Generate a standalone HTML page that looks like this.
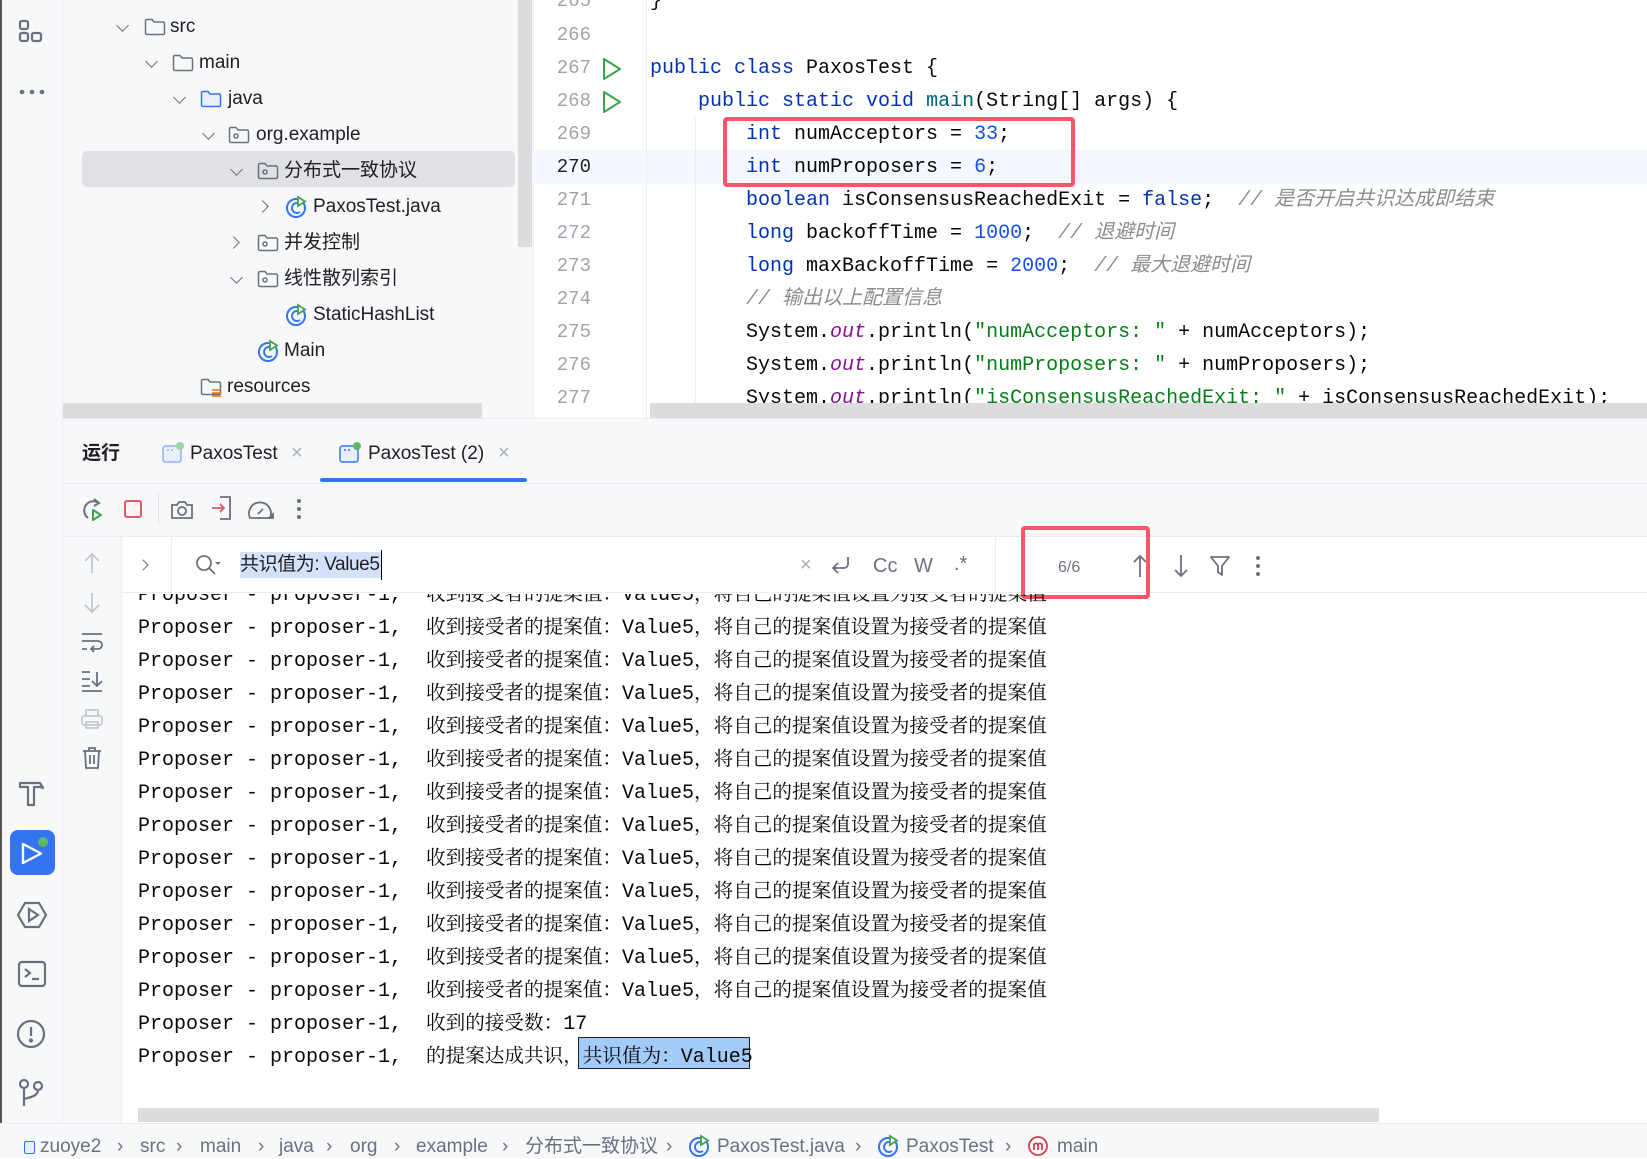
<!DOCTYPE html>
<html><head><meta charset="utf-8">
<style>
*{margin:0;padding:0;box-sizing:border-box}
body{width:1647px;height:1158px;overflow:hidden;background:#fff;font-family:"Liberation Sans","Noto Sans CJK SC",sans-serif;color:#1e1f22;position:relative}
.a{position:absolute}
.t{position:absolute;font-size:19px;line-height:24px;white-space:nowrap}
.chev{position:absolute;width:9px;height:9px;border-right:1.6px solid #6c707e;border-bottom:1.6px solid #6c707e}
.down{transform:rotate(45deg)}
.right{transform:rotate(-45deg)}
.ln{position:absolute;left:533px;width:58px;text-align:right;font-size:19px;color:#a0a3ab;font-family:"Liberation Mono",monospace;line-height:33px}
.code{position:absolute;left:650px;font-size:20px;line-height:33px;white-space:pre;font-family:"Liberation Mono","Noto Sans CJK SC",monospace;color:#080808}
.kw{color:#0033b3}.num{color:#1750eb}.str{color:#067d17}.cm{color:#8c8c8c;font-style:italic}.fld{color:#871094;font-style:italic}.fn{color:#00627a}
.con{position:absolute;left:138px;font-size:20px;line-height:33px;white-space:pre;font-family:"Liberation Mono",monospace;color:#080808}
.cj{font-family:"Noto Serif CJK SC",serif;font-size:19.6px}
.sb{position:absolute;top:1135px;font-size:19px;color:#6c707e;line-height:24px;white-space:nowrap}
.tr{position:absolute;left:0;top:2px;width:533px;height:418px}
.ed{position:absolute;left:0;top:2px;width:1647px;height:416px}
</style></head><body>

<!-- left strip -->
<div class="a" style="left:0;top:0;width:63px;height:1123px;background:#f7f8fa;border-right:1px solid #ebecf0"></div>
<div class="a" style="left:0;top:0;width:2px;height:1123px;background:#555"></div>
<svg class="a" style="left:18px;top:18px" width="28" height="28" viewBox="0 0 28 28" fill="none" stroke="#6c707e" stroke-width="2.2"><rect x="2" y="3" width="8" height="8" rx="2"/><rect x="2" y="15" width="8" height="8" rx="2"/><rect x="14" y="15" width="9" height="8" rx="2"/></svg>
<svg class="a" style="left:18px;top:88px" width="28" height="8"><circle cx="4" cy="4" r="2.3" fill="#6c707e"/><circle cx="14" cy="4" r="2.3" fill="#6c707e"/><circle cx="24" cy="4" r="2.3" fill="#6c707e"/></svg>
<svg class="a" style="left:17px;top:779px" width="28" height="30" viewBox="0 0 28 30" fill="none" stroke="#6c707e" stroke-width="2.2" stroke-linejoin="round"><path d="M3 4h20l3 5-3-1H17v18h-6V8H3z"/></svg>
<div class="a" style="left:10px;top:830px;width:45px;height:45px;background:#3574f0;border-radius:8px"></div>
<svg class="a" style="left:10px;top:830px" width="45" height="45"><path d="M13 14 L13 33 L31 23.5 Z" fill="none" stroke="#fff" stroke-width="2.4" stroke-linejoin="round"/><circle cx="33" cy="12" r="5" fill="#5fb865"/></svg>
<svg class="a" style="left:16px;top:900px" width="32" height="30" fill="none" stroke="#6c707e" stroke-width="2.2"><path d="M9 3h14l7 12-7 12H9L2 15z"/><path d="M13 9v12l9-6z"/></svg>
<svg class="a" style="left:17px;top:960px" width="30" height="28" fill="none" stroke="#6c707e" stroke-width="2.2"><rect x="2" y="2" width="26" height="24" rx="3"/><path d="M8 9l5 4-5 4M15 19h7"/></svg>
<svg class="a" style="left:16px;top:1019px" width="30" height="30" fill="none" stroke="#6c707e" stroke-width="2.2"><circle cx="15" cy="15" r="13"/><path d="M15 8v9"/><circle cx="15" cy="21.5" r="1" fill="#6c707e"/></svg>
<svg class="a" style="left:17px;top:1078px" width="28" height="30" fill="none" stroke="#6c707e" stroke-width="2.2"><circle cx="7" cy="6" r="4"/><circle cx="21" cy="8" r="4"/><path d="M7 10v18M21 12c0 6-7 7-14 9"/></svg>

<!-- project tree -->
<div class="a" style="left:63px;top:0;width:470px;height:418px;background:#f7f8fa"></div>
<div class="a" style="left:82px;top:151px;width:433px;height:36px;background:#dfe1e5;border-radius:5px"></div>
<div class="a" style="left:518px;top:0;width:14px;height:247px;background:#dcdcdf"></div>
<div class="tr">
<div class="chev down" style="left:118px;top:19px"></div>
<svg class="a" style="left:144px;top:16px" width="22" height="18" fill="none" stroke="#6c707e" stroke-width="1.5"><path d="M1.5 3a1.5 1.5 0 011.5-1.5h5l2 2.5h9a1.5 1.5 0 011.5 1.5V15a1.5 1.5 0 01-1.5 1.5H3A1.5 1.5 0 011.5 15z"/></svg>
<div class="t" style="left:170px;top:13px">src</div>

<div class="chev down" style="left:147px;top:55px"></div>
<svg class="a" style="left:172px;top:52px" width="22" height="18" fill="none" stroke="#6c707e" stroke-width="1.5"><path d="M1.5 3a1.5 1.5 0 011.5-1.5h5l2 2.5h9a1.5 1.5 0 011.5 1.5V15a1.5 1.5 0 01-1.5 1.5H3A1.5 1.5 0 011.5 15z"/></svg>
<div class="t" style="left:199px;top:49px">main</div>

<div class="chev down" style="left:175px;top:91px"></div>
<svg class="a" style="left:200px;top:88px" width="22" height="18" fill="#e7effd" stroke="#3574f0" stroke-width="1.5"><path d="M1.5 3a1.5 1.5 0 011.5-1.5h5l2 2.5h9a1.5 1.5 0 011.5 1.5V15a1.5 1.5 0 01-1.5 1.5H3A1.5 1.5 0 011.5 15z"/></svg>
<div class="t" style="left:228px;top:85px">java</div>

<div class="chev down" style="left:204px;top:127px"></div>
<svg class="a" style="left:228px;top:124px" width="22" height="18" fill="none" stroke="#6c707e" stroke-width="1.5"><path d="M1.5 3a1.5 1.5 0 011.5-1.5h5l2 2.5h9a1.5 1.5 0 011.5 1.5V15a1.5 1.5 0 01-1.5 1.5H3A1.5 1.5 0 011.5 15z"/><circle cx="8" cy="10" r="2"/></svg>
<div class="t" style="left:256px;top:121px">org.example</div>

<div class="chev down" style="left:232px;top:163px"></div>
<svg class="a" style="left:257px;top:160px" width="22" height="18" fill="none" stroke="#6c707e" stroke-width="1.5"><path d="M1.5 3a1.5 1.5 0 011.5-1.5h5l2 2.5h9a1.5 1.5 0 011.5 1.5V15a1.5 1.5 0 01-1.5 1.5H3A1.5 1.5 0 011.5 15z"/><circle cx="8" cy="10" r="2"/></svg>
<div class="t" style="left:284px;top:157px">分布式一致协议</div>

<div class="chev right" style="left:258px;top:200px"></div>
<svg class="a" style="left:285px;top:193px" width="24" height="24" fill="none" stroke="#3574f0" stroke-width="2"><circle cx="11" cy="13" r="9"/><path d="M15 9a5 5 0 100 8"/><path d="M13 2v9l7-4.5z" fill="#fff" stroke="#3fa34d" stroke-width="1.8"/></svg>
<div class="t" style="left:313px;top:193px">PaxosTest.java</div>

<div class="chev right" style="left:229px;top:236px"></div>
<svg class="a" style="left:257px;top:232px" width="22" height="18" fill="none" stroke="#6c707e" stroke-width="1.5"><path d="M1.5 3a1.5 1.5 0 011.5-1.5h5l2 2.5h9a1.5 1.5 0 011.5 1.5V15a1.5 1.5 0 01-1.5 1.5H3A1.5 1.5 0 011.5 15z"/><circle cx="8" cy="10" r="2"/></svg>
<div class="t" style="left:284px;top:229px">并发控制</div>

<div class="chev down" style="left:232px;top:271px"></div>
<svg class="a" style="left:257px;top:268px" width="22" height="18" fill="none" stroke="#6c707e" stroke-width="1.5"><path d="M1.5 3a1.5 1.5 0 011.5-1.5h5l2 2.5h9a1.5 1.5 0 011.5 1.5V15a1.5 1.5 0 01-1.5 1.5H3A1.5 1.5 0 011.5 15z"/><circle cx="8" cy="10" r="2"/></svg>
<div class="t" style="left:284px;top:265px">线性散列索引</div>

<svg class="a" style="left:285px;top:301px" width="24" height="24" fill="none" stroke="#3574f0" stroke-width="2"><circle cx="11" cy="13" r="9"/><path d="M15 9a5 5 0 100 8"/><path d="M13 2v9l7-4.5z" fill="#fff" stroke="#3fa34d" stroke-width="1.8"/></svg>
<div class="t" style="left:313px;top:301px">StaticHashList</div>

<svg class="a" style="left:257px;top:337px" width="24" height="24" fill="none" stroke="#3574f0" stroke-width="2"><circle cx="11" cy="13" r="9"/><path d="M15 9a5 5 0 100 8"/><path d="M13 2v9l7-4.5z" fill="#fff" stroke="#3fa34d" stroke-width="1.8"/></svg>
<div class="t" style="left:284px;top:337px">Main</div>

<svg class="a" style="left:200px;top:376px" width="24" height="20" fill="none" stroke="#6c707e" stroke-width="1.5"><path d="M1.5 3a1.5 1.5 0 011.5-1.5h5l2 2.5h9a1.5 1.5 0 011.5 1.5V15a1.5 1.5 0 01-1.5 1.5H3A1.5 1.5 0 011.5 15z"/><path d="M12 12h9M12 15h9M12 18h9" stroke="#e66d17"/></svg>
<div class="t" style="left:227px;top:373px">resources</div>
</div>
<div class="a" style="left:63px;top:403px;width:419px;height:15px;background:#dcdcdf"></div>

<!-- editor -->
<div class="a" style="left:533px;top:0;width:1px;height:418px;background:#ebecf0"></div>
<div class="a" style="left:533px;top:150px;width:1114px;height:34px;background:#f5f8fe"></div>
<div class="a" style="left:646px;top:0;width:1px;height:418px;background:#ebecf0"></div>
<div class="a" style="left:695px;top:118px;width:1px;height:300px;background:#ebecf0"></div>
<div class="ed">
<div class="ln" style="top:-17px">265</div>
<div class="ln" style="top:17px">266</div>
<div class="ln" style="top:50px">267</div>
<div class="ln" style="top:83px">268</div>
<div class="ln" style="top:116px">269</div>
<div class="ln" style="top:149px;color:#1e1f22">270</div>
<div class="ln" style="top:182px">271</div>
<div class="ln" style="top:215px">272</div>
<div class="ln" style="top:248px">273</div>
<div class="ln" style="top:281px">274</div>
<div class="ln" style="top:314px">275</div>
<div class="ln" style="top:347px">276</div>
<div class="ln" style="top:380px">277</div>
<svg class="a" style="left:601px;top:55px" width="22" height="24" fill="none" stroke="#3fa34d" stroke-width="2" stroke-linejoin="round"><path d="M3 2v20l16-10z"/></svg>
<svg class="a" style="left:601px;top:88px" width="22" height="24" fill="none" stroke="#3fa34d" stroke-width="2" stroke-linejoin="round"><path d="M3 2v20l16-10z"/></svg>

<div class="code" style="top:-17px">}</div>
<div class="code" style="top:50px"><span class="kw">public class</span> PaxosTest {</div>
<div class="code" style="top:83px">    <span class="kw">public static void</span> <span class="fn">main</span>(String[] args) {</div>
<div class="code" style="top:116px">        <span class="kw">int</span> numAcceptors = <span class="num">33</span>;</div>
<div class="code" style="top:149px">        <span class="kw">int</span> numProposers = <span class="num">6</span>;</div>
<div class="code" style="top:182px">        <span class="kw">boolean</span> isConsensusReachedExit = <span class="kw">false</span>;  <span class="cm">// 是否开启共识达成即结束</span></div>
<div class="code" style="top:215px">        <span class="kw">long</span> backoffTime = <span class="num">1000</span>;  <span class="cm">// 退避时间</span></div>
<div class="code" style="top:248px">        <span class="kw">long</span> maxBackoffTime = <span class="num">2000</span>;  <span class="cm">// 最大退避时间</span></div>
<div class="code" style="top:281px">        <span class="cm">// 输出以上配置信息</span></div>
<div class="code" style="top:314px">        System.<span class="fld">out</span>.println(<span class="str">"numAcceptors: "</span> + numAcceptors);</div>
<div class="code" style="top:347px">        System.<span class="fld">out</span>.println(<span class="str">"numProposers: "</span> + numProposers);</div>
<div class="code" style="top:380px">        System.<span class="fld">out</span>.println(<span class="str">"isConsensusReachedExit: "</span> + isConsensusReachedExit);</div>
</div>
<div class="a" style="left:650px;top:403px;width:997px;height:15px;background:#dcdcdf"></div>
<div class="a" style="left:723px;top:117px;width:352px;height:70px;border:4px solid #f4566a;border-radius:4px"></div>

<!-- bottom panel -->
<div class="a" style="left:63px;top:418px;width:1584px;height:118px;background:#f7f8fa;border-top:1px solid #ebecf0"></div>
<div class="a" style="left:63px;top:483px;width:1584px;height:1px;background:#ebecf0"></div>
<div class="a" style="left:63px;top:536px;width:1584px;height:1px;background:#ebecf0"></div>
<div class="t" style="left:82px;top:442px;font-weight:bold;font-size:19px">运行</div>
<svg class="a" style="left:161px;top:441px" width="24" height="24" fill="#e7effd" stroke="#8fb0f0" stroke-width="1.5"><rect x="2" y="5" width="18" height="16" rx="2.5"/><path d="M6 9h2M10 9h2" /><circle cx="19" cy="5" r="4" fill="#a0d6a4" stroke="none"/></svg>
<div class="t" style="left:190px;top:442px">PaxosTest</div>
<div class="t" style="left:291px;top:441px;color:#a8adbd;font-size:20px">×</div>
<svg class="a" style="left:338px;top:441px" width="24" height="24" fill="#e7effd" stroke="#3574f0" stroke-width="1.5"><rect x="2" y="5" width="18" height="16" rx="2.5"/><path d="M6 9h2M10 9h2"/><circle cx="19" cy="5" r="4" fill="#5fb865" stroke="none"/></svg>
<div class="t" style="left:368px;top:442px">PaxosTest (2)</div>
<div class="t" style="left:498px;top:441px;color:#a8adbd;font-size:20px">×</div>
<div class="a" style="left:320px;top:478px;width:207px;height:4px;background:#3574f0;border-radius:2px"></div>

<!-- toolbar -->
<svg class="a" style="left:80px;top:497px" width="26" height="26" fill="none" stroke-width="2"><path d="M19 6A9 9 0 1 0 8 21" stroke="#6c707e"/><path d="M14 2l5 4-5 3" stroke="#6c707e"/><path d="M13 13v10l8-5z" stroke="#3fa34d" stroke-linejoin="round"/></svg>
<div class="a" style="left:124px;top:500px;width:18px;height:18px;border:2px solid #e55765;border-radius:3px;background:#fff5f5"></div>
<div class="a" style="left:158px;top:494px;width:1px;height:30px;background:#dfe1e5"></div>
<svg class="a" style="left:170px;top:498px" width="24" height="22" fill="none" stroke="#6c707e" stroke-width="1.8"><path d="M2 7h5l2-3h6l2 3h5v13H2z"/><circle cx="12" cy="13" r="4"/></svg>
<svg class="a" style="left:210px;top:495px" width="24" height="26" fill="none" stroke-width="1.8"><path d="M10 2h10v22H10" stroke="#6c707e"/><path d="M2 13h12M10 9l4 4-4 4" stroke="#e55765"/></svg>
<svg class="a" style="left:247px;top:498px" width="28" height="24" fill="none" stroke="#6c707e" stroke-width="1.8"><path d="M3 20a11 11 0 1 1 20 0z"/><path d="M11 16l5-5"/><path d="M22 20l4-4v4z" fill="#6c707e"/></svg>
<svg class="a" style="left:296px;top:497px" width="6" height="24"><circle cx="3" cy="4" r="2" fill="#6c707e"/><circle cx="3" cy="12" r="2" fill="#6c707e"/><circle cx="3" cy="20" r="2" fill="#6c707e"/></svg>

<!-- left tool column -->
<div class="a" style="left:63px;top:537px;width:59px;height:586px;background:#f7f8fa;border-right:1px solid #ebecf0"></div>
<svg class="a" style="left:82px;top:551px" width="20" height="24" fill="none" stroke="#c4c7ce" stroke-width="1.8"><path d="M10 22V3M3 10l7-7 7 7"/></svg>
<svg class="a" style="left:82px;top:591px" width="20" height="24" fill="none" stroke="#c4c7ce" stroke-width="1.8"><path d="M10 2v19M3 14l7 7 7-7"/></svg>
<svg class="a" style="left:80px;top:631px" width="24" height="22" fill="none" stroke="#6c707e" stroke-width="1.8"><path d="M2 3h20M2 10h16a4 4 0 010 8h-6M2 18h5M14 15l-3 3 3 3"/></svg>
<svg class="a" style="left:80px;top:669px" width="24" height="24" fill="none" stroke="#6c707e" stroke-width="1.8"><path d="M2 3h8M2 10h8M2 17h8M2 22h20M17 3v14M12 12l5 5 5-5"/></svg>
<svg class="a" style="left:80px;top:708px" width="24" height="22" fill="none" stroke="#c4c7ce" stroke-width="1.8"><rect x="2" y="8" width="20" height="9" rx="2"/><path d="M6 8V2h12v6M6 14h12v6H6z"/></svg>
<svg class="a" style="left:81px;top:746px" width="22" height="24" fill="none" stroke="#6c707e" stroke-width="1.8"><path d="M2 5h18M8 5V2h6v3M4 5l1 17h12l1-17M9 9v9M13 9v9"/></svg>

<!-- search row -->
<div class="a" style="left:122px;top:537px;width:1525px;height:56px;background:#fff;border-bottom:1px solid #ebecf0"></div>
<div class="chev right" style="left:139px;top:561px;width:8px;height:8px"></div>
<div class="a" style="left:171px;top:537px;width:1px;height:56px;background:#ebecf0"></div>
<svg class="a" style="left:195px;top:554px" width="28" height="24" fill="none" stroke="#6c707e" stroke-width="1.8"><circle cx="9" cy="9" r="7"/><path d="M14 14l6 6"/><path d="M20 8h6l-3 3z" fill="#6c707e" stroke="none"/></svg>
<div class="a" style="left:240px;top:552px;width:141px;height:26px;background:#d3e1fb"></div>
<div class="t" style="left:240px;top:553px;font-size:19px;letter-spacing:-0.4px">共识值为: Value5</div>
<div class="a" style="left:381px;top:550px;width:1px;height:30px;background:#000"></div>
<div class="t" style="left:800px;top:553px;color:#a8adbd;font-size:20px">×</div>
<svg class="a" style="left:830px;top:554px" width="22" height="24" fill="none" stroke="#6c707e" stroke-width="1.8"><path d="M18 3v7a4 4 0 01-4 4H4M8 9l-5 5 5 5"/></svg>
<div class="t" style="left:873px;top:554px;color:#6c707e;font-size:20px">Cc</div>
<div class="t" style="left:914px;top:554px;color:#6c707e;font-size:20px">W</div>
<div class="t" style="left:954px;top:552px;color:#6c707e;font-size:20px">.*</div>
<div class="a" style="left:995px;top:537px;width:1px;height:56px;background:#ebecf0"></div>
<div class="t" style="left:1058px;top:556px;color:#6c707e;font-size:16px">6/6</div>
<svg class="a" style="left:1131px;top:553px" width="18" height="26" fill="none" stroke="#6c707e" stroke-width="1.8"><path d="M9 24V3M3 9l6-6 6 6"/></svg>
<svg class="a" style="left:1172px;top:553px" width="18" height="26" fill="none" stroke="#6c707e" stroke-width="1.8"><path d="M9 2v21M3 17l6 6 6-6"/></svg>
<svg class="a" style="left:1209px;top:554px" width="22" height="24" fill="none" stroke="#6c707e" stroke-width="1.8" stroke-linejoin="round"><path d="M2 3h18l-7 9v9l-4-3v-6z"/></svg>
<svg class="a" style="left:1255px;top:554px" width="6" height="24"><circle cx="3" cy="4" r="2" fill="#6c707e"/><circle cx="3" cy="12" r="2" fill="#6c707e"/><circle cx="3" cy="20" r="2" fill="#6c707e"/></svg>
<div class="a" style="left:1021px;top:526px;width:129px;height:73px;border:4px solid #f4566a;border-radius:4px"></div>

<!-- console -->
<div class="a" style="left:122px;top:594px;width:1525px;height:529px;overflow:hidden">
<div style="position:absolute;left:-122px;top:-594px;width:1647px;height:1158px">
<div class="con" style="top:575px">Proposer - proposer-1,  <span class="cj">收到接受者的提案值：</span>Value5<span class="cj">，将自己的提案值设置为接受者的提案值</span></div>
<div class="con" style="top:608px">Proposer - proposer-1,  <span class="cj">收到接受者的提案值：</span>Value5<span class="cj">，将自己的提案值设置为接受者的提案值</span></div>
<div class="con" style="top:641px">Proposer - proposer-1,  <span class="cj">收到接受者的提案值：</span>Value5<span class="cj">，将自己的提案值设置为接受者的提案值</span></div>
<div class="con" style="top:674px">Proposer - proposer-1,  <span class="cj">收到接受者的提案值：</span>Value5<span class="cj">，将自己的提案值设置为接受者的提案值</span></div>
<div class="con" style="top:707px">Proposer - proposer-1,  <span class="cj">收到接受者的提案值：</span>Value5<span class="cj">，将自己的提案值设置为接受者的提案值</span></div>
<div class="con" style="top:740px">Proposer - proposer-1,  <span class="cj">收到接受者的提案值：</span>Value5<span class="cj">，将自己的提案值设置为接受者的提案值</span></div>
<div class="con" style="top:773px">Proposer - proposer-1,  <span class="cj">收到接受者的提案值：</span>Value5<span class="cj">，将自己的提案值设置为接受者的提案值</span></div>
<div class="con" style="top:806px">Proposer - proposer-1,  <span class="cj">收到接受者的提案值：</span>Value5<span class="cj">，将自己的提案值设置为接受者的提案值</span></div>
<div class="con" style="top:839px">Proposer - proposer-1,  <span class="cj">收到接受者的提案值：</span>Value5<span class="cj">，将自己的提案值设置为接受者的提案值</span></div>
<div class="con" style="top:872px">Proposer - proposer-1,  <span class="cj">收到接受者的提案值：</span>Value5<span class="cj">，将自己的提案值设置为接受者的提案值</span></div>
<div class="con" style="top:905px">Proposer - proposer-1,  <span class="cj">收到接受者的提案值：</span>Value5<span class="cj">，将自己的提案值设置为接受者的提案值</span></div>
<div class="con" style="top:938px">Proposer - proposer-1,  <span class="cj">收到接受者的提案值：</span>Value5<span class="cj">，将自己的提案值设置为接受者的提案值</span></div>
<div class="con" style="top:971px">Proposer - proposer-1,  <span class="cj">收到接受者的提案值：</span>Value5<span class="cj">，将自己的提案值设置为接受者的提案值</span></div>
<div class="con" style="top:1004px">Proposer - proposer-1,  <span class="cj">收到的接受数：</span>17</div>
<div class="a" style="left:578px;top:1037px;width:172px;height:32px;background:#a3cbfa;border:1.5px solid #222"></div>
<div class="con" style="top:1037px">Proposer - proposer-1,  <span class="cj">的提案达成共识，</span><span class="cj">共识值为：</span>Value5</div>
<div class="a" style="left:138px;top:1108px;width:1241px;height:14px;background:#dcdcdf"></div>
</div></div>

<!-- status bar -->
<div class="a" style="left:0;top:1123px;width:1647px;height:35px;background:#f7f8fa;border-top:1px solid #ebecf0"></div>
<div class="a" style="left:24px;top:1141px;width:11px;height:13px;border:1.5px solid #3574f0;border-radius:2px;background:#e7effd"></div>
<div class="sb" style="left:40px">zuoye2</div>
<div class="sb" style="left:117px">›</div>
<div class="sb" style="left:140px">src</div>
<div class="sb" style="left:176px">›</div>
<div class="sb" style="left:200px">main</div>
<div class="sb" style="left:258px">›</div>
<div class="sb" style="left:279px">java</div>
<div class="sb" style="left:326px">›</div>
<div class="sb" style="left:350px">org</div>
<div class="sb" style="left:394px">›</div>
<div class="sb" style="left:416px">example</div>
<div class="sb" style="left:502px">›</div>
<div class="sb" style="left:525px">分布式一致协议</div>
<div class="sb" style="left:666px">›</div>
<svg class="a" style="left:688px;top:1134px" width="24" height="24" fill="none" stroke="#3574f0" stroke-width="2"><circle cx="11" cy="13" r="9"/><path d="M15 9a5 5 0 100 8"/><path d="M13 2v9l7-4.5z" fill="#fff" stroke="#3fa34d" stroke-width="1.8"/></svg>
<div class="sb" style="left:717px">PaxosTest.java</div>
<div class="sb" style="left:855px">›</div>
<svg class="a" style="left:877px;top:1134px" width="24" height="24" fill="none" stroke="#3574f0" stroke-width="2"><circle cx="11" cy="13" r="9"/><path d="M15 9a5 5 0 100 8"/><path d="M13 2v9l7-4.5z" fill="#fff" stroke="#3fa34d" stroke-width="1.8"/></svg>
<div class="sb" style="left:906px">PaxosTest</div>
<div class="sb" style="left:1005px">›</div>
<svg class="a" style="left:1026px;top:1135px" width="24" height="24" fill="none" stroke="#db3b4b" stroke-width="1.8"><circle cx="12" cy="11" r="9"/><path d="M8 15V9M8 10c0-2 4-2 4 0v5M12 10c0-2 4-2 4 0v5"/></svg>
<div class="sb" style="left:1057px">main</div>
</body></html>
